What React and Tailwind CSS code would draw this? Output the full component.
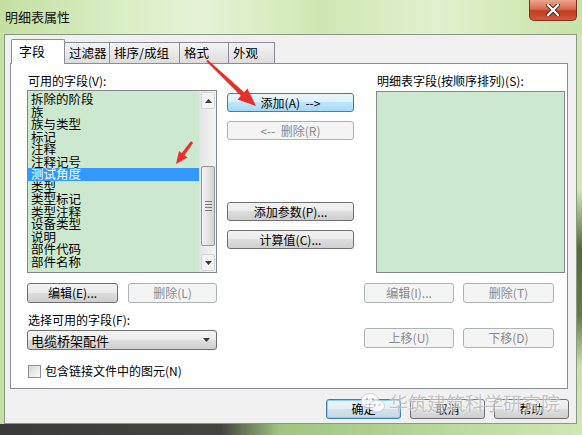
import React from 'react';

const fields = ['拆除的阶段', '族', '族与类型', '标记', '注释', '注释记号', '测试角度', '类型', '类型标记', '类型注释', '设备类型', '说明', '部件代码', '部件名称'];

const tabs = [
  { label: '字段', w: 'w-[54px]' },
  { label: '过滤器', w: 'w-[46px]' },
  { label: '排序/成组', w: 'w-[71px]' },
  { label: '格式', w: 'w-[50px]' },
  { label: '外观', w: 'w-[47px]' },
];

function Btn({ children, disabled, hot, def, className = '' }) {
  let look = 'border-[#707070] bg-[linear-gradient(#f2f2f2_0%,#ebebeb_50%,#dddddd_50%,#cfcfcf_100%)] text-black';
  if (disabled) look = 'border-[#adb2b5] bg-[#f4f4f4] text-[#8a8a8a]';
  if (hot) look = 'border-[#3c7fb1] bg-[linear-gradient(#eaf6fd_0%,#d9f0fc_50%,#bee6fd_50%,#a7d9f5_100%)] text-black';
  if (def) look = 'border-[#3c7fb1] bg-[linear-gradient(#eef6fb_0%,#e3eef5_50%,#d3e3ed_50%,#c3d8e6_100%)] text-black shadow-[inset_0_0_0_1px_#8ad0f5]';
  return (
    <div className={`flex items-center justify-center rounded-[3px] border text-[12px] leading-none whitespace-pre ${look} ${className}`}>
      {children}
    </div>
  );
}

function Tri({ up, className = '' }) {
  return (
    <svg width="7" height="4" viewBox="0 0 7 4" className={className}>
      <polygon points={up ? '0,4 7,4 3.5,0' : '0,0 7,0 3.5,4'} fill="#3c3c3c" />
    </svg>
  );
}

function ScrollBar() {
  return (
    <div className="w-[17px] h-full flex flex-col bg-[linear-gradient(90deg,#e6e6e6,#f4f4f4)] border-l border-[#e2e2e2]">
      <div className="h-[17px] m-[1px] rounded-[2px] border border-[#d6d6d6] bg-[#f3f3f3] flex items-center justify-center">
        <Tri up />
      </div>
      <div className="h-[56px]" />
      <div className="h-[80px] mx-[1px] rounded-[2px] border border-[#979797] bg-[linear-gradient(90deg,#f3f3f3,#e4e4e4_50%,#d2d2d2)] flex flex-col items-center justify-center gap-[2px]">
        <div className="w-[7px] h-px bg-[#777]" />
        <div className="w-[7px] h-px bg-[#777]" />
        <div className="w-[7px] h-px bg-[#777]" />
        <div className="w-[7px] h-px bg-[#777]" />
      </div>
      <div className="flex-1" />
      <div className="h-[17px] m-[1px] rounded-[2px] border border-[#d6d6d6] bg-[#f3f3f3] flex items-center justify-center">
        <Tri />
      </div>
    </div>
  );
}

export default function App() {
  return (
    <div className="relative w-[582px] h-[435px] overflow-hidden bg-[#c9e4ab] font-['Noto_Sans_CJK_SC','Liberation_Sans',sans-serif] text-[12px] text-black">
      {/* title bar */}
      <div className="h-[34px] flex items-start bg-[linear-gradient(90deg,#c3e0a1_0%,#d9edc4_20%,#e6f3d8_35%,#cfe7b3_55%,#e1f0cf_75%,#c7e3a7_100%)]">
        <span className="mt-[9px] ml-[5px] text-[13px] leading-[16px] text-[#111]">明细表属性</span>
        <div className="ml-auto mr-[5px] w-[48px] h-[21px] rounded-b-[5px] border border-t-0 border-[#7e3022] bg-[linear-gradient(#eba68f_0%,#d96a4f_45%,#c13c22_55%,#cf5a3c_100%)] flex items-center justify-center">
          <svg width="14" height="12" viewBox="0 0 14 12">
            <path d="M2 1 L12 11 M12 1 L2 11" stroke="#4a2018" strokeWidth="4" strokeLinecap="round" />
            <path d="M2 1 L12 11 M12 1 L2 11" stroke="#fff" strokeWidth="2.4" strokeLinecap="round" />
          </svg>
        </div>
      </div>

      <div className="flex h-[390px]">
        <div className="w-[4px] bg-[#c4e1a4]" />
        {/* client area */}
        <div className="w-[573px] h-full bg-[#f0f0f0] border border-[#8c9685] pl-[5px] pt-[4px] flex flex-col">
          {/* tabs */}
          <div className="flex items-end h-[24px] pl-px">
            {tabs.map((t, i) =>
              i === 0 ? (
                <div key={t.label} className={`${t.w} h-[25px] -mb-px z-10 bg-white border border-b-0 border-[#898c95] rounded-t-[2px] pl-[7px] pt-[3px] text-[13px] leading-[16px]`}>
                  {t.label}
                </div>
              ) : (
                <div key={t.label} className={`${t.w} h-[21px] -ml-px bg-[linear-gradient(#f3f3f3,#e9e9e9_50%,#dcdcdc)] border border-b-0 border-[#898c95] pl-[4px] pt-[2px] text-[12.5px] leading-[16px] whitespace-nowrap overflow-hidden`}>
                  {t.label}
                </div>
              )
            )}
          </div>

          {/* panel */}
          <div className="w-[558px] h-[326px] bg-white border border-[#898c95] flex pl-[16px] pt-[9px]">
            {/* left column */}
            <div className="w-[190px] flex flex-col">
              <div className="h-[17px] leading-[15px] pl-px">可用的字段(V):</div>
              <div className="h-[183px] border border-[#828790] bg-[#cce8cf] flex">
                <div className="flex-1 pt-[2px] overflow-hidden">
                  {fields.map((f, i) => (
                    <div
                      key={f}
                      className={`h-[12.5px] leading-[12.5px] pl-[3px] text-[12.5px] whitespace-nowrap ${i === 6 ? 'bg-[#3399ff] text-white' : ''}`}
                    >
                      {f}
                    </div>
                  ))}
                </div>
                <ScrollBar />
              </div>
              <div className="flex gap-[10px] mt-[10px]">
                <Btn className="w-[91px] h-[20px]">编辑(E)...</Btn>
                <Btn disabled className="w-[89px] h-[20px]">删除(L)</Btn>
              </div>
              <div className="mt-[9px] h-[17px] leading-[15px] pl-px">选择可用的字段(F):</div>
              <div className="mt-px h-[20px] rounded-[3px] border border-[#707070] bg-[linear-gradient(#f2f2f2_0%,#ebebeb_50%,#dddddd_50%,#cfcfcf_100%)] flex items-center pl-[3px] pr-[6px]">
                <span className="text-[13px] leading-none">电缆桥架配件</span>
                <Tri className="ml-auto" />
              </div>
              <div className="mt-[14px] flex items-center gap-[4px] pl-px">
                <div className="w-[13px] h-[13px] border border-[#8f8f8f] bg-[linear-gradient(135deg,#d8d8d8,#fbfbfb)]" />
                <span className="leading-[14px]">包含链接文件中的图元(N)</span>
              </div>
            </div>

            {/* middle column */}
            <div className="w-[127px] ml-[10px] flex flex-col pt-[20px]">
              <Btn hot className="h-[19px]">添加(A)  --&gt;</Btn>
              <Btn disabled className="h-[19px] mt-[9px]">&lt;--  删除(R)</Btn>
              <Btn className="h-[19px] mt-[62px]">添加参数(P)...</Btn>
              <Btn className="h-[19px] mt-[9px]">计算值(C)...</Btn>
            </div>

            {/* right column */}
            <div className="w-[201px] ml-[10px] flex flex-col">
              <div className="h-[18px] leading-[16px] pl-[13px]">明细表字段(按顺序排列)(S):</div>
              <div className="ml-[12px] w-[189px] h-[182px] border border-[#828790] bg-[#cce8cf]" />
              <div className="flex gap-[9px] mt-[10px]">
                <Btn disabled className="w-[90px] h-[20px]">编辑(I)...</Btn>
                <Btn disabled className="w-[91px] h-[20px]">删除(T)</Btn>
              </div>
              <div className="flex gap-[9px] mt-[25px]">
                <Btn disabled className="w-[90px] h-[20px]">上移(U)</Btn>
                <Btn disabled className="w-[91px] h-[20px]">下移(D)</Btn>
              </div>
            </div>
          </div>

          {/* dialog buttons */}
          <div className="flex justify-end gap-[9px] pr-[7px] mt-[10px]">
            <Btn def className="w-[75px] h-[20px]">确定</Btn>
            <Btn className="w-[75px] h-[20px]">取消</Btn>
            <Btn className="w-[75px] h-[20px]">帮助</Btn>
          </div>
        </div>
        <div className="w-[5px] bg-[linear-gradient(180deg,#cfe8b4_0%,#cfe8b4_40%,#4f6e37_55%,#5e7e41_72%,#c6e2a6_85%,#cfe8b4_100%)]" />
      </div>
      <div className="h-[11px] bg-[linear-gradient(90deg,#3a3a3a_0%,#45453f_38%,#9fc57f_48%,#cfe9b2_100%)]" />

      {/* watermark */}
      <div className="absolute left-[360px] top-[391px] flex items-center gap-[3px] pointer-events-none opacity-80">
        <svg width="26" height="22" viewBox="0 0 26 22">
          <ellipse cx="10" cy="9" rx="9" ry="7.5" fill="#fff" stroke="#c8c8c8" />
          <ellipse cx="17" cy="14" rx="7.5" ry="6" fill="#fff" stroke="#c8c8c8" />
          <circle cx="7" cy="7" r="1.2" fill="#bbb" />
          <circle cx="13" cy="7" r="1.2" fill="#bbb" />
          <circle cx="15" cy="13" r="1" fill="#bbb" />
          <circle cx="19.5" cy="13" r="1" fill="#bbb" />
        </svg>
        <span className="text-[19px] leading-[24px] text-[#b8b8b8] [text-shadow:0_0_2px_#fff,0_0_2px_#fff]">华筑建筑科学研究院</span>
      </div>

      {/* red annotation arrows */}
      <svg className="absolute left-0 top-0 pointer-events-none" width="582" height="435">
        <polygon points="206,61 208,60 245,93 242,97" fill="#e8302a" />
        <polygon points="256,106 237.5,99.5 247.5,88.5" fill="#e8302a" />
        <polygon points="191,141 193,143 184,156 181,154" fill="#e8302a" />
        <polygon points="176,164 179,151 187.5,157.5" fill="#e8302a" />
      </svg>
    </div>
  );
}
